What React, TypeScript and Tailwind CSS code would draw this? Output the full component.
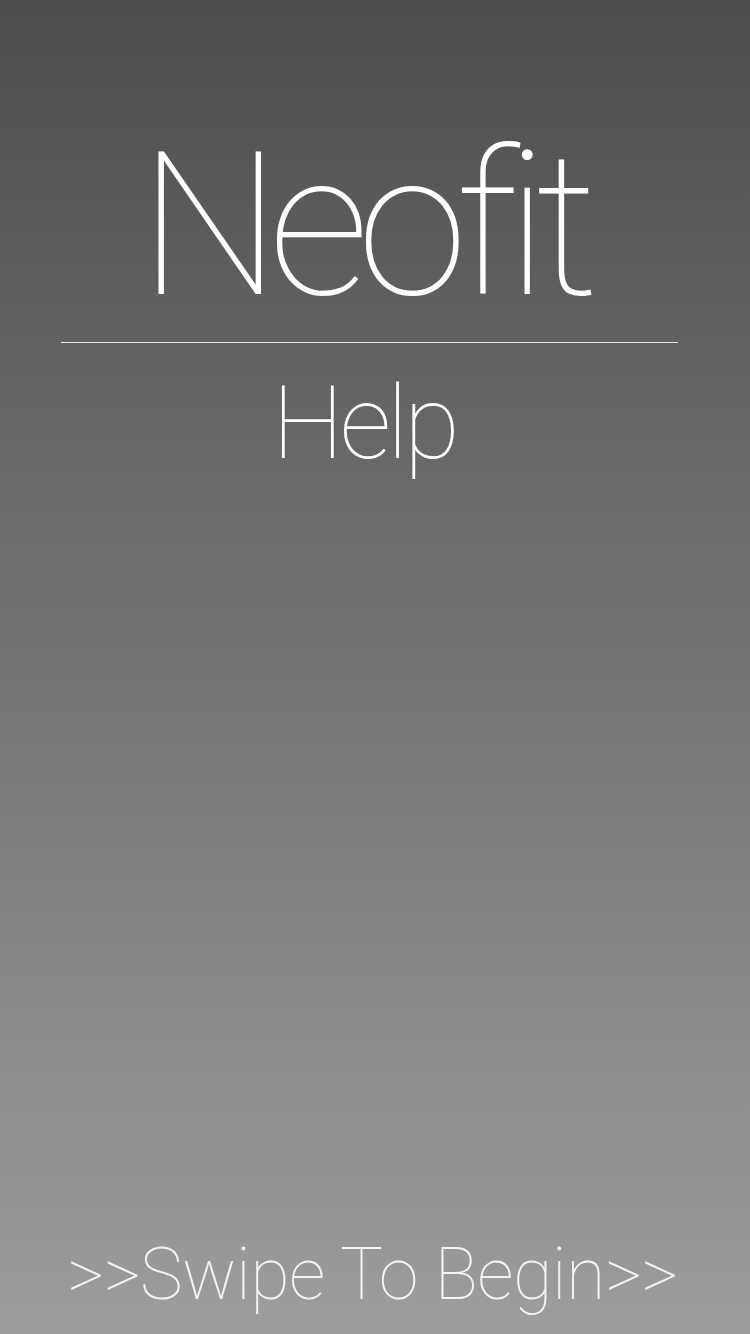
import React from 'react';

const thin = { fontFamily: 'Roboto, "Liberation Sans", sans-serif' };

export default function App() {
  return (
    <div
      className="flex min-h-[1334px] w-[750px] flex-col bg-gradient-to-b from-[#4e4e4e] to-[#9d9d9d] text-white"
      style={thin}
    >
      <h1 className="mt-[126px] pr-[24px] text-center text-[200px] leading-none font-thin tracking-[-12px]">
        Neofit
      </h1>
      <div className="mt-[16px] ml-[61px] h-px w-[617px] bg-[#e8e8e8]" />
      <h2 className="mt-[29px] pr-[22px] text-center text-[102px] leading-none font-thin tracking-[-4px]">
        Help
      </h2>
      <div className="flex-1" />
      <p className="mb-[23px] pr-[5px] text-center text-[72px] leading-none font-thin tracking-[-0.6px] text-[#f4f4f4]">
        &gt;&gt;Swipe To Begin&gt;&gt;
      </p>
    </div>
  );
}
